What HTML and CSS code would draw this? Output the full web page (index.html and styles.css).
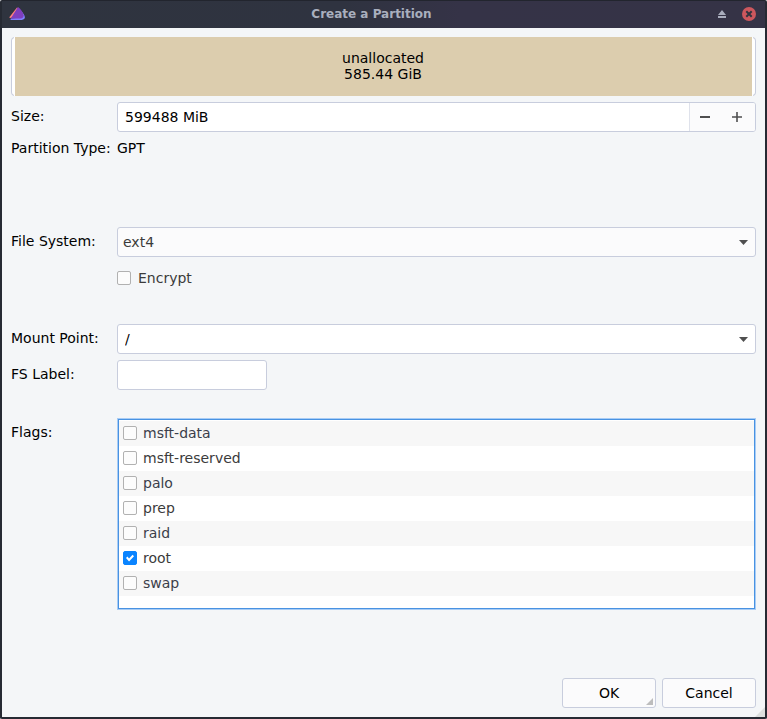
FILE: index.html
```html
<!DOCTYPE html>
<html lang="en">
<head>
<meta charset="utf-8">
<title>Create a Partition</title>
<link rel="stylesheet" href="styles.css">
</head>
<body>
<div class="window">
  <header class="titlebar">
    <svg class="logo" viewBox="0 0 16 14" aria-hidden="true">
      <path d="M8 0.6 L0.3 10.2 Q0.6 11.4 3 10.5 L9 1.2 Z" fill="#ff7f7f"/>
      <path d="M10.5 2.2 Q16.5 8 15.8 11 Q14.8 13 11 13 H2 Q1 12.4 1.8 11.4 L12.5 10.5 Z" fill="#7f7fff"/>
      <path d="M9 0 Q13.6 3.6 14.6 8.3 Q14.8 11.2 11.5 11.6 L1.8 11.6 Z" fill="#7f3fbf"/>
    </svg>
    <h1 class="title">Create a Partition</h1>
    <div class="window-actions">
      <button class="window-button" type="button" aria-label="Shade">
        <svg width="14" height="14" viewBox="0 0 14 14"><path d="M7 3 L11 8 H3 Z M3 9 H11 V11 H3 Z" fill="#a9adbd"/></svg>
      </button>
      <button class="window-button" type="button" aria-label="Close">
        <svg width="14" height="14" viewBox="0 0 14 14"><circle cx="7" cy="7" r="7" fill="#cc575d"/><path d="M4.3 4.3 L9.7 9.7 M9.7 4.3 L4.3 9.7" stroke="#2f343f" stroke-width="2"/></svg>
      </button>
    </div>
  </header>
  <form class="dialog">
    <div class="disk"><div class="segment">unallocated<br>585.44 GiB</div></div>
    <div class="fields">
      <label class="name" for="size">Size:</label>
      <div class="spin">
        <input class="spin-value" id="size" type="text" value="599488 MiB">
        <div class="spin-buttons">
          <button class="step" type="button" aria-label="Decrease"><svg width="10" height="10" viewBox="0 0 10 10"><path d="M0 4H10V6H0Z" fill="#4f4f4f"/></svg></button>
          <button class="step" type="button" aria-label="Increase"><svg width="10" height="10" viewBox="0 0 10 10"><path d="M0 4.2H4.2V0H5.8V4.2H10V5.8H5.8V10H4.2V5.8H0Z" fill="#4f4f4f"/></svg></button>
        </div>
      </div>
      <span class="name">Partition Type:</span>
      <output class="type">GPT</output>
      <label class="name" for="filesystem">File System:</label>
      <div class="combo">
        <select class="field tinted" id="filesystem"><option>ext4</option></select>
        <svg class="arrow" viewBox="0 0 9 5" aria-hidden="true"><path d="M0 0H9L4.5 5Z" fill="#4f4f4f"/></svg>
      </div>
      <label class="check encrypt"><input class="box" type="checkbox">Encrypt</label>
      <label class="name" for="mount">Mount Point:</label>
      <div class="combo">
        <select class="field" id="mount"><option>/</option></select>
        <svg class="arrow" viewBox="0 0 9 5" aria-hidden="true"><path d="M0 0H9L4.5 5Z" fill="#4f4f4f"/></svg>
      </div>
      <label class="name" for="fslabel">FS Label:</label>
      <input class="field short" id="fslabel" type="text">
      <span class="name flags-name" id="flags-name">Flags:</span>
      <div class="flags" role="group" aria-labelledby="flags-name">
        <label class="check flag"><input class="box" type="checkbox">msft-data</label>
        <label class="check flag"><input class="box" type="checkbox">msft-reserved</label>
        <label class="check flag"><input class="box" type="checkbox">palo</label>
        <label class="check flag"><input class="box" type="checkbox">prep</label>
        <label class="check flag"><input class="box" type="checkbox">raid</label>
        <label class="check flag"><input class="box" type="checkbox" checked>root</label>
        <label class="check flag"><input class="box" type="checkbox">swap</label>
      </div>
    </div>
    <footer class="actions">
      <button class="action default" type="submit">OK</button>
      <button class="action" type="button">Cancel</button>
    </footer>
  </form>
</div>
</body>
</html>
```
FILE: styles.css
```css
* { box-sizing: border-box; }

body {
  margin: 0;
  background: #fff;
  color: #000;
  font: 14px/16px "DejaVu Sans", sans-serif;
}

button, input, select { margin: 0; color: inherit; font: inherit; }
button { padding: 0; }
svg { display: block; }

.window {
  position: relative;
  display: flex;
  flex-direction: column;
  min-height: 100vh;
  border: solid #262a33;
  border-width: 0 2px 2px;
  border-radius: 2px;
  background: #f4f6f8;
}

.window::after {
  content: "";
  position: absolute;
  right: 0;
  bottom: 0;
  width: 10px;
  height: 10px;
  background: #dcdfde;
  clip-path: polygon(100% 0, 100% 100%, 0 100%);
}

.titlebar {
  display: grid;
  grid-template-columns: 24px 1fr 48px;
  align-items: center;
  height: 28px;
  padding: 0 7px 1px;
  border-top: 1px solid #22252e;
  background: linear-gradient(90deg, #2f343f, #2f3340 45%, #353347 60%, #353346);
}

.logo { width: 16px; height: 14px; }

.title {
  margin: 0;
  color: #a9afbe;
  font-size: 12px;
  font-weight: bold;
  text-align: center;
}

.window-actions { display: flex; justify-content: flex-end; gap: 13px; padding-right: 2px; }
.window-button { border: 0; background: none; }

.dialog { display: flex; flex: 1; flex-direction: column; padding: 9px; }

.disk {
  height: 59px;
  margin-bottom: 6px;
  padding: 0 3px;
  border-radius: 4px;
  background: #fff;
  box-shadow: inset 0 0 0 1px #c8cddd;
}

.segment {
  height: 100%;
  padding: 13px 1px 0 0;
  border-left: 1px solid #fff;
  border-right: 1px solid #fff;
  background: #dccdae;
  background-clip: padding-box;
  text-align: center;
}

.fields { display: grid; grid-template-columns: 100px 1fr; gap: 6px; align-items: start; }
.name { padding-top: 6px; white-space: nowrap; }

.spin, .field {
  height: 30px;
  border: 1px solid #c8cddd;
  border-radius: 3px;
  background: #fff;
}

.spin { display: flex; overflow: hidden; }
.spin-value { flex: 1; min-width: 0; padding: 0 7px; border: 0; background: none; outline: 0; }
.spin-buttons { display: flex; gap: 2px; padding-right: 3px; border-left: 1px solid #dfe2eb; background: #fbfbfc; }
.step { display: grid; width: 30px; place-items: center; border: 0; background: none; }

.spin + .name { padding-top: 2px; }
.type { height: 83px; padding-top: 2px; }

.combo { display: grid; align-items: center; }
.combo > * { grid-area: 1 / 1; }
.field { width: 100%; padding: 0 7px; appearance: none; outline: 0; }
.tinted { padding: 0 5px; background: #fbfbfc; color: #3b3b3b; }
.arrow { width: 9px; height: 5px; margin-right: 8px; justify-self: end; pointer-events: none; }
.field.short { width: 150px; }

.check { display: flex; align-items: center; color: #3b3b3b; }

.box {
  display: grid;
  flex: none;
  width: 14px;
  height: 14px;
  place-items: center;
  border: 1px solid #b1b1b1;
  border-radius: 2px;
  background: #fcfcfc;
  appearance: none;
}

.box:checked { border-color: #0a84ff; background: #0a84ff; }

.box:checked::after {
  content: "";
  width: 8px;
  height: 8px;
  background: #fff;
  clip-path: polygon(0 50%, 18% 32%, 38% 55%, 82% 8%, 100% 28%, 38% 94%);
}

.encrypt { grid-column: 2; gap: 7px; height: 30px; margin-bottom: 25px; }

.flags-name, .flags { margin-top: 22px; }

.flags {
  height: 192px;
  padding: 2px 1px 1px;
  overflow: auto;
  border: 1px solid #a8ccf5;
  background: #fff;
  box-shadow: inset 0 0 0 1px #4892e2;
}

.flag { gap: 6px; height: 25px; padding: 0 0 1px 4px; }
.flag:nth-child(odd) { background: #f7f7f7; color: #3b3e4a; }

.actions { display: flex; gap: 6px; justify-content: flex-end; margin-top: auto; }

.action {
  position: relative;
  width: 94px;
  height: 30px;
  border: 1px solid #c8cddd;
  border-radius: 3px;
  background: #fbfbfc;
}

.default::after {
  content: "";
  position: absolute;
  right: 2px;
  bottom: 2px;
  width: 7px;
  height: 7px;
  background: #bdbdbd;
  clip-path: polygon(100% 0, 100% 100%, 0 100%);
}
```
